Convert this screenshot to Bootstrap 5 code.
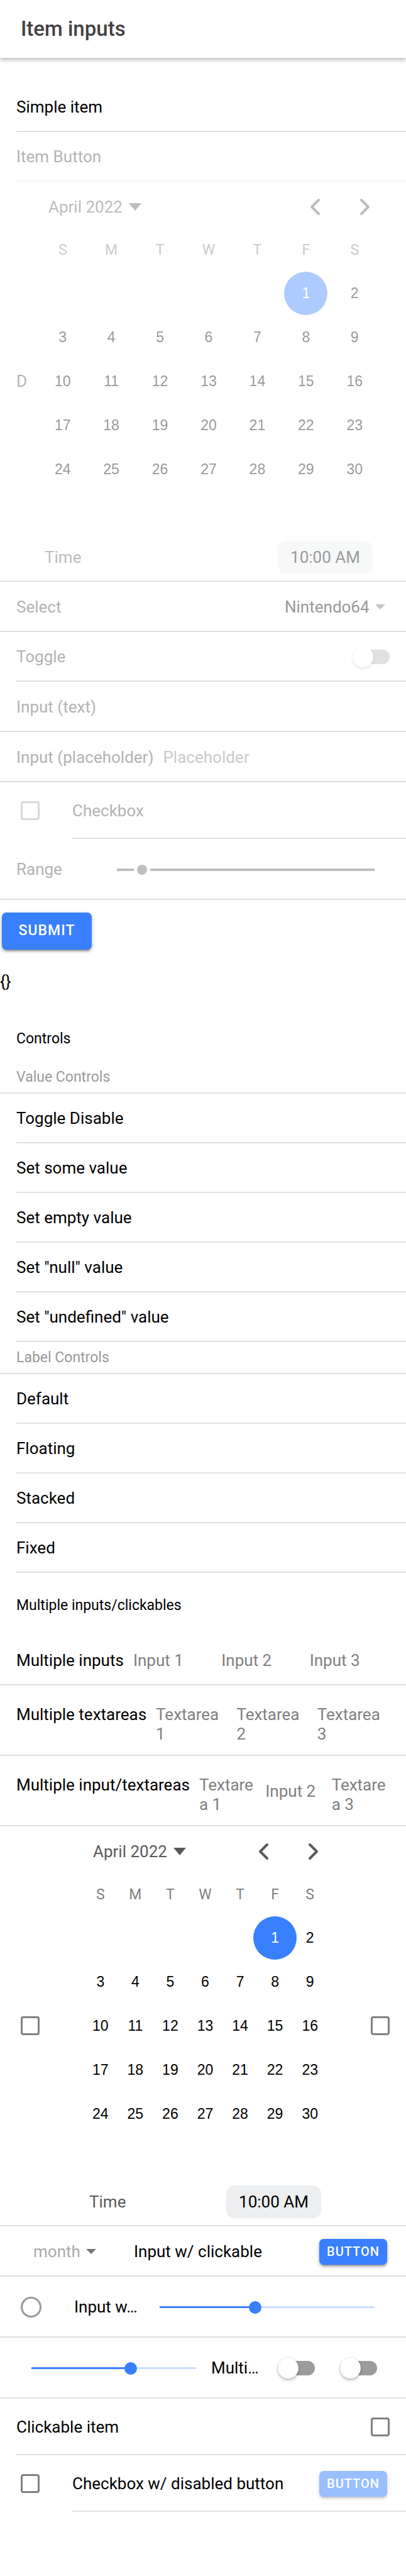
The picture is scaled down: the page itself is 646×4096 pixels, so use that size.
<!DOCTYPE html>
<html lang="en">
<head>
<meta charset="utf-8">
<meta name="viewport" content="width=device-width, initial-scale=1">
<title>Item inputs</title>
<link href="https://cdn.jsdelivr.net/npm/bootstrap@5.3.0/dist/css/bootstrap.min.css" rel="stylesheet">
<style>
  body { font-family: Roboto, "Liberation Sans", sans-serif; font-size: 26px; line-height: 31px; color: #000; background: #fff; }
  .topbar { height: 92px; padding: 0 33px; box-shadow: 0 3px 7px rgba(0,0,0,.28); }
  .topbar h1 { font-size: 33px; font-weight: 500; line-height: 40px; color: #424242; }
  .page-body { padding-top: 39px; }

  /* rows */
  .item { display: flex; width: 100%; padding: 0 0 0 26px; border: 0; background: none; text-align: left; color: inherit; }
  .item > .inner { display: flex; flex: 1; align-items: center; min-width: 0; min-height: 79px; padding-top: 2px; padding-right: 26px; border-bottom: 2px solid #e0e0e0; }
  .item.full { padding-left: 0; }
  .item.full > .inner { padding-left: 26px; min-height: 80px; }
  .item.slim-end > .inner { padding-right: 13px; }
  .item.tall > .inner { min-height: 97px; }
  .item.areas > .inner { min-height: 112px; }
  .item.checks > .inner { min-height: 90px; }
  .item.is-off.faint > .inner { border-color: #f5f5f5; }
  .item.is-off label, .item.is-off .caption { color: #b3b3b3; }
  .start-slot { display: flex; align-items: center; width: 89px; padding-left: 7px; }
  .list-title { height: 74px; padding: 2px 26px 0; font-size: 23px; line-height: 28px; font-weight: 400; }
  .divider { height: 51px; padding: 0 26px; font-size: 23px; line-height: 28px; font-weight: 400; color: #999; border-bottom: 2px solid #e0e0e0; }
  .group { padding-top: 14px; }
  .group > .list-title { margin-bottom: 11px; }

  /* text fields */
  .lead-label { padding-right: 15px; }
  .field { flex: 1; width: 0; min-width: 0; padding: 0 13px 0 0; border: 0; outline: 0; background: none; color: #000; font: inherit; line-height: 31px; resize: none; overflow: hidden; }
  .field::placeholder { color: #808080; opacity: 1; }
  .field:disabled::placeholder { color: #c9c9c9; }
  textarea.field { height: 62px; }
  .areas label, .areas textarea { align-self: flex-start; margin-top: 29px; }
  .pick { appearance: none; border: 0; outline: 0; padding: 0 25px 0 0; background: none; font: inherit; color: #000; opacity: 1; }
  .pick-wrap { position: relative; display: inline-flex; align-items: center; margin: 0 7px 0 0; }
  .pick-wrap.month { margin: 0 60px 0 27px; }
  .pick-wrap::after { content: ""; position: absolute; right: 0; border: 8px solid transparent; border-top-color: #757575; border-bottom: 0; pointer-events: none; }
  .pick:disabled { color: #999; }
  .month .pick { color: #aaa; }
  .pick-wrap.off::after { border-top-color: #c4c4c4; }

  /* tick boxes, radios, toggles */
  .tick { appearance: none; flex: none; width: 30px; height: 30px; margin: 0; border: 3px solid #808080; border-radius: 4px; background: #fff; }
  .tick:disabled { border-color: #d9d9d9; }
  .tick.dot { width: 33px; height: 33px; border-color: #999; border-radius: 50%; }
  .toggle { appearance: none; position: relative; flex: none; width: 59px; height: 23px; margin: 0; border-radius: 12px; background: #9c9c9c; }
  .toggle::before { content: ""; position: absolute; left: 0; top: -5px; width: 33px; height: 33px; border-radius: 50%; background: #fff; box-shadow: 0 3px 4px rgba(0,0,0,.22), 0 0 3px rgba(0,0,0,.16); }
  .toggle:disabled { background: #e1e1e1; }
  .toggle:disabled::before { box-shadow: 0 3px 4px rgba(0,0,0,.08), 0 0 3px rgba(0,0,0,.04); }

  /* sliders */
  .slider { appearance: none; flex: 1; min-width: 0; height: 33px; margin: 0; background: linear-gradient(to right, #3880ff var(--fill), #cbdeff var(--fill)) center / 100% 3px no-repeat; }
  .slider::-webkit-slider-thumb { appearance: none; width: 20px; height: 20px; border: 0; border-radius: 50%; background: #3880ff; }
  .slider:disabled { background: linear-gradient(#bfbfbf, #bfbfbf) center / 100% 4px no-repeat; }
  .slider:disabled::-webkit-slider-thumb { width: 16px; height: 16px; background: #bfbfbf; box-shadow: 0 0 0 5px #fff; }

  /* buttons */
  .btn-raised { --bs-btn-color: #fff; --bs-btn-bg: #3880ff; --bs-btn-hover-color: #fff; --bs-btn-hover-bg: #4c8dff; --bs-btn-disabled-color: #fff; --bs-btn-disabled-bg: #3880ff; --bs-btn-disabled-opacity: .5;
    flex: none; padding: 0; border: 0; border-radius: 7px; font-weight: 500; letter-spacing: 1px; text-transform: uppercase; box-shadow: 0 4px 3px -3px rgba(0,0,0,.3), 0 3px 4px rgba(0,0,0,.24), 0 1px 7px rgba(0,0,0,.12); }
  .btn-wide { width: 143px; height: 59px; margin: 20px 3px 7px; font-size: 23px; }
  .btn-mini { width: 108px; height: 41px; margin-right: 4px; font-size: 20px; line-height: 24px; }
  .output { margin: 0; height: 97px; padding-top: 28px; font: inherit; }

  /* calendar */
  .item.dated > .inner { padding-top: 0; }
  .calendar { flex: 1; min-width: 0; height: 634px; }
  .calendar.is-off { opacity: .4; }
  .cal-head { height: 80px; padding-left: 16px; color: #595959; }
  .cal-head button { border: 0; background: none; padding: 0; color: inherit; }
  .cal-month { gap: 10px; }
  .arrow { width: 46px; height: 46px; }
  .arrow + .arrow { margin-left: 32px; }
  .calendar table { width: 100%; table-layout: fixed; }
  .calendar th { height: 62px; padding: 0 0 4px; text-align: center; font-size: 23px; line-height: 28px; font-weight: 400; color: #808080; }
  .calendar td { height: 70px; padding: 0; }
  .day { flex: none; width: 69px; height: 69px; padding: 0; border: 0; border-radius: 50%; background: none; color: #000; font-family: "Liberation Sans", Arial, sans-serif; font-size: 23px; line-height: 28px; }
  .day.active { background: #3880ff; color: #fff; }
  .cal-foot { padding: 0 10px; margin-top: 79px; color: #595959; }
  .pill { width: 151px; height: 52px; padding: 0; border: 0; border-radius: 13px; background: #edeef0; color: #000; }
</style>
</head>
<body>

<header class="topbar d-flex align-items-center"><h1 class="m-0">Item inputs</h1></header>

<main class="page-body">
  <form onsubmit="return false">
    <div class="item"><div class="inner">Simple item</div></div>
    <button type="button" class="item is-off faint" disabled><span class="inner caption">Item Button</span></button>

    <div class="item is-off full dated"><div class="inner pe-0">
      <span class="caption" style="width:35px">D</span>
      <div class="calendar is-off" data-calendar="off"></div>
      <span style="width:43px"></span>
    </div></div>

    <div class="item is-off full"><div class="inner justify-content-between">
      <label for="console">Select</label>
      <span class="pick-wrap off"><select id="console" class="pick" disabled><option>Nintendo64</option></select></span>
    </div></div>
    <div class="item is-off"><div class="inner justify-content-between">
      <label for="tg">Toggle</label><input id="tg" class="toggle" type="checkbox" role="switch" disabled>
    </div></div>
    <div class="item is-off full slim-end"><div class="inner">
      <label for="t1">Input (text)</label><input id="t1" class="field" type="text" disabled>
    </div></div>
    <div class="item is-off full slim-end"><div class="inner">
      <label for="t2" class="lead-label">Input (placeholder)</label><input id="t2" class="field" type="text" placeholder="Placeholder" disabled>
    </div></div>
    <div class="item is-off checks">
      <div class="start-slot"><input id="cb" class="tick" type="checkbox" disabled></div>
      <div class="inner"><label for="cb">Checkbox</label></div>
    </div>
    <div class="item is-off full tall"><div class="inner">
      <label for="rg" style="width:160px">Range</label>
      <input id="rg" class="slider me-4" type="range" value="8" disabled>
    </div></div>

    <button type="submit" class="btn btn-raised btn-wide">Submit</button>
    <pre class="output">{}</pre>
  </form>

  <section>
    <h2 class="list-title d-flex align-items-center m-0">Controls</h2>
    <h3 class="divider d-flex align-items-center m-0">Value Controls</h3>
    <button type="button" class="item"><span class="inner">Toggle Disable</span></button>
    <button type="button" class="item"><span class="inner">Set some value</span></button>
    <button type="button" class="item"><span class="inner">Set empty value</span></button>
    <button type="button" class="item"><span class="inner">Set "null" value</span></button>
    <button type="button" class="item"><span class="inner">Set "undefined" value</span></button>
    <h3 class="divider d-flex align-items-center m-0">Label Controls</h3>
    <button type="button" class="item"><span class="inner">Default</span></button>
    <button type="button" class="item"><span class="inner">Floating</span></button>
    <button type="button" class="item"><span class="inner">Stacked</span></button>
    <button type="button" class="item"><span class="inner">Fixed</span></button>
  </section>

  <section class="group">
    <h2 class="list-title d-flex align-items-center">Multiple inputs/clickables</h2>

    <div class="item full slim-end"><div class="inner">
      <label for="a1" class="lead-label">Multiple inputs</label>
      <input id="a1" class="field" placeholder="Input 1">
      <input class="field" placeholder="Input 2" aria-label="Input 2">
      <input class="field" placeholder="Input 3" aria-label="Input 3">
    </div></div>
    <div class="item full slim-end areas"><div class="inner">
      <label for="b1" class="lead-label">Multiple textareas</label>
      <textarea id="b1" class="field" placeholder="Textarea 1"></textarea>
      <textarea class="field" placeholder="Textarea 2" aria-label="Textarea 2"></textarea>
      <textarea class="field" placeholder="Textarea 3" aria-label="Textarea 3"></textarea>
    </div></div>
    <div class="item full slim-end areas"><div class="inner">
      <label for="c1" class="lead-label">Multiple input/textareas</label>
      <textarea id="c1" class="field" placeholder="Textarea 1"></textarea>
      <input class="field" placeholder="Input 2" aria-label="Input 2">
      <textarea class="field" placeholder="Textarea 3" aria-label="Textarea 3"></textarea>
    </div></div>

    <div class="item full dated"><div class="inner">
      <span class="start-slot" style="width:106px"><input class="tick" type="checkbox" aria-label="Before date"></span>
      <div class="calendar" data-calendar="on"></div>
      <span style="width:69px"></span><input class="tick" type="checkbox" aria-label="After date">
    </div></div>

    <div class="item full"><div class="inner">
      <span class="pick-wrap month"><select class="pick" aria-label="month"><option>month</option></select></span>
      <span class="flex-fill">Input w/ clickable</span>
      <button type="button" class="btn btn-raised btn-mini">Button</button>
    </div></div>
    <div class="item full tall"><div class="inner">
      <span class="start-slot" style="width:92px"><input id="rd" class="tick dot" type="radio"></span>
      <label for="rd" style="width:136px">Input w…</label>
      <input class="slider me-4" type="range" value="44" aria-label="Level" style="--fill:45%">
    </div></div>
    <div class="item full tall"><div class="inner">
      <input id="mr" class="slider ms-4" type="range" value="61" style="--fill:60%">
      <label for="mr" class="ps-4" style="width:130px">Multi…</label>
      <input class="toggle" type="checkbox" role="switch" aria-label="First toggle">
      <span style="width:40px"></span>
      <input class="toggle" type="checkbox" role="switch" aria-label="Second toggle">
      <span style="width:20px"></span>
    </div></div>
    <div class="item checks"><div class="inner justify-content-between">
      <label for="ci">Clickable item</label><input id="ci" class="tick" type="checkbox">
    </div></div>
    <div class="item checks">
      <div class="start-slot"><input id="cd" class="tick" type="checkbox"></div>
      <div class="inner justify-content-between">
        <label for="cd">Checkbox w/ disabled button</label>
        <button type="button" class="btn btn-raised btn-mini" disabled>Button</button>
      </div>
    </div>
  </section>
</main>

<script>
  // April 2022 starts on a Friday and has 30 days
  document.querySelectorAll('[data-calendar]').forEach(function (box) {
    var off = box.dataset.calendar === 'off' ? ' disabled' : '';
    var rows = '';
    for (var w = 0; w < 5; w++) {
      rows += '<tr>';
      for (var d = 0; d < 7; d++) {
        var n = w * 7 + d - 4;
        rows += '<td>' + (n > 0 ? '<div class="d-flex justify-content-center"><button type="button" class="day' + (n === 1 ? ' active' : '') + '"' + off + '>' + n + '</button></div>' : '') + '</td>';
      }
      rows += '</tr>';
    }
    var arrow = function (label, path) {
      return '<button type="button" class="arrow d-flex align-items-center justify-content-center" aria-label="' + label + '"' + off + '><svg width="20" height="28" viewBox="0 0 20 28" fill="none" stroke="currentColor" stroke-width="4" stroke-linecap="round" stroke-linejoin="round"><path d="' + path + '"/></svg></button>';
    };
    box.innerHTML =
      '<div class="cal-head d-flex align-items-center justify-content-between">' +
        '<button type="button" class="cal-month d-flex align-items-center"' + off + '>April 2022<svg width="20" height="12" viewBox="0 0 20 12" fill="currentColor"><path d="M0 0h20L10 12z"/></svg></button>' +
        '<div class="d-flex">' + arrow('Previous month', 'M15 3L4 14l11 11') + arrow('Next month', 'M5 3l11 11L5 25') + '</div></div>' +
      '<table><thead><tr>' + 'SMTWTFS'.split('').map(function (c) { return '<th>' + c + '</th>'; }).join('') + '</tr></thead><tbody>' + rows + '</tbody></table>' +
      '<div class="cal-foot d-flex align-items-center justify-content-between"><span>Time</span><button type="button" class="pill"' + off + '>10:00 AM</button></div>';
  });
</script>
<script src="https://cdn.jsdelivr.net/npm/bootstrap@5.3.0/dist/js/bootstrap.bundle.min.js"></script>
</body>
</html>
